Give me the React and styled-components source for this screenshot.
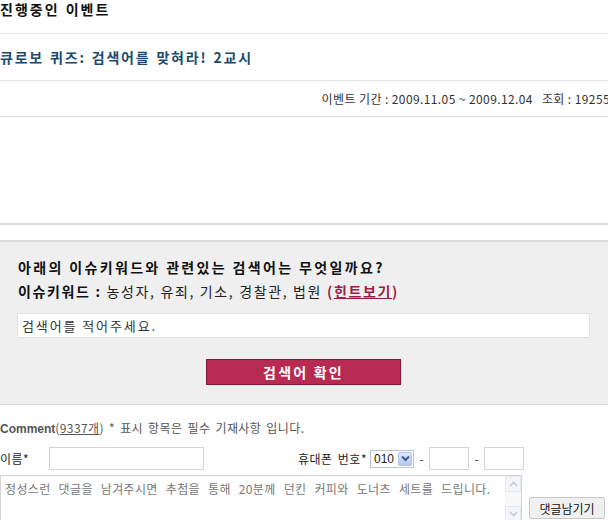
import React from 'react'
import styled, { createGlobalStyle } from 'styled-components'

const GlobalStyle = createGlobalStyle`
    html, body {
        margin: 0;
        padding: 0;
        background: #fff;
    }
    body {
        font-family: "Noto Sans CJK KR", "Liberation Sans", sans-serif;
        color: #222;
        overflow: hidden;
    }
    * {
        box-sizing: border-box;
    }
`

const App = () => {
    return (
        <Page>
            <GlobalStyle />
            <SectionTitle>진행중인 이벤트</SectionTitle>
            <EventTitle>큐로보 퀴즈: 검색어를 맞혀라! 2교시</EventTitle>
            <InfoRow>
                <Info>이벤트 기간 : 2009.11.05 ~ 2009.12.04</Info>
                <Info>조회 : 19255</Info>
            </InfoRow>
            <Banner />
            <QuizBox>
                <Question>아래의 이슈키워드와 관련있는 검색어는 무엇일까요?</Question>
                <Keywords>
                    <b>이슈키워드 :</b> 농성자, 유죄, 기소, 경찰관, 법원{' '}
                    <Hint>(<u>힌트보기</u>)</Hint>
                </Keywords>
                <AnswerInput defaultValue="검색어를 적어주세요." />
                <SubmitButton>검색어 확인</SubmitButton>
            </QuizBox>
            <CommentArea>
                <CommentHead>
                    <CommentLabel>Comment</CommentLabel>(<Count>9337개</Count>) * 표시 항목은 필수 기재사항 입니다.
                </CommentHead>
                <FieldRow>
                    <Field>
                        <Label width={49}>이름*</Label>
                        <TextInput width={155} />
                    </Field>
                    <Field>
                        <Label>휴대폰 번호*</Label>
                        <SelectBox>
                            <Select defaultValue="010">
                                <option>010</option>
                                <option>011</option>
                                <option>016</option>
                            </Select>
                            <SelectArrow>
                                <svg width="9" height="7" viewBox="0 0 9 7">
                                    <path d="M1 1.5 L4.5 5 L8 1.5" fill="none" stroke="#3c5a9a" strokeWidth="2" />
                                </svg>
                            </SelectArrow>
                        </SelectBox>
                        <Dash>-</Dash>
                        <TextInput width={40} />
                        <Dash>-</Dash>
                        <TextInput width={40} />
                    </Field>
                </FieldRow>
                <MessageRow>
                    <MessageBox>
                        <Message placeholder="정성스런 댓글을 남겨주시면 추첨을 통해 20분께 던킨 커피와 도너츠 세트를 드립니다." />
                        <ScrollBar>
                            <ScrollButton>
                                <svg width="9" height="6" viewBox="0 0 9 6">
                                    <path d="M1 5 L4.5 1.5 L8 5" fill="none" stroke="#c3cad6" strokeWidth="1.6" />
                                </svg>
                            </ScrollButton>
                            <ScrollTrack />
                            <ScrollButton>
                                <svg width="9" height="6" viewBox="0 0 9 6">
                                    <path d="M1 1 L4.5 4.5 L8 1" fill="none" stroke="#c3cad6" strokeWidth="1.6" />
                                </svg>
                            </ScrollButton>
                        </ScrollBar>
                    </MessageBox>
                    <PostButton>댓글남기기</PostButton>
                </MessageRow>
            </CommentArea>
        </Page>
    )
}

export default App

const Page = styled.div`
    width: 608px;
    height: 520px;
    overflow: hidden;
`
const SectionTitle = styled.div`
    height: 34px;
    border-bottom: 1px solid #e8e8e8;
    font-size: 14px;
    font-weight: 700;
    line-height: 18px;
    letter-spacing: 2px;
    word-spacing: 1px;
    color: #111;
`
const EventTitle = styled.div`
    height: 47px;
    border-bottom: 1px solid #e2e2e2;
    display: flex;
    align-items: center;
    font-size: 14px;
    font-weight: 700;
    letter-spacing: 1.8px;
    word-spacing: 1px;
    color: #1b4a70;
`
const InfoRow = styled.div`
    height: 36px;
    border-bottom: 1px solid #dedede;
    display: flex;
    justify-content: flex-end;
    align-items: center;
    gap: 9px;
    margin-right: -2px;
    white-space: nowrap;
    overflow: hidden;
`
const Info = styled.span`
    font-size: 12px;
    color: #333;
    letter-spacing: 0.4px;
`
const Banner = styled.div`
    height: 108px;
    border-bottom: 2px solid #dcdcdc;
`
const QuizBox = styled.div`
    margin-top: 15px;
    height: 165px;
    background: #efefef;
    border-top: 2px solid #dcdcdc;
    border-bottom: 1px solid #dcdcdc;
    padding: 15px 18px 0 17px;
    display: flex;
    flex-direction: column;
`
const Question = styled.div`
    font-size: 14px;
    font-weight: 700;
    line-height: 20px;
    letter-spacing: 2.35px;
    color: #111;
    padding-left: 1px;
    white-space: nowrap;
`
const Keywords = styled.div`
    margin-top: 4px;
    font-size: 14px;
    line-height: 20px;
    letter-spacing: 1.65px;
    color: #222;
    padding-left: 1px;
    white-space: nowrap;
    b {
        color: #111;
    }
`
const Hint = styled.b`
    color: #9c1d4a !important;
`
const AnswerInput = styled.input`
    margin-top: 12px;
    height: 25px;
    width: 100%;
    border: 1px solid #e2e2e2;
    background: #fff;
    padding: 0 4px;
    font-family: inherit;
    font-size: 13px;
    letter-spacing: 1.9px;
    color: #333;
    outline: none;
`
const SubmitButton = styled.button`
    margin: 21px auto 0;
    width: 195px;
    height: 26px;
    background: #b72b52;
    border: 1px solid #7e1a37;
    color: #fff;
    font-family: inherit;
    font-size: 14px;
    font-weight: 700;
    letter-spacing: 2.2px;
    padding: 0;
    cursor: pointer;
`
const CommentArea = styled.div`
    padding-top: 15px;
`
const CommentHead = styled.div`
    font-size: 12px;
    line-height: 16px;
    color: #555;
    white-space: nowrap;
    letter-spacing: 0.4px;
    word-spacing: 2px;
`
const CommentLabel = styled.span`
    font-family: "Liberation Sans", sans-serif;
    font-weight: 700;
    color: #555;
    letter-spacing: 0;
`
const Count = styled.span`
    text-decoration: underline;
`
const FieldRow = styled.div`
    margin-top: 10px;
    width: 524px;
    display: flex;
    justify-content: space-between;
    align-items: center;
`
const Field = styled.div`
    display: flex;
    align-items: center;
`
const Label = styled.span`
    width: ${p => (p.width ? `${p.width}px` : 'auto')};
    margin-right: ${p => (p.width ? '0' : '3px')};
    font-size: 12px;
    letter-spacing: 0.5px;
    word-spacing: 2px;
    color: #222;
    white-space: nowrap;
`
const TextInput = styled.input`
    width: ${p => p.width}px;
    height: 23px;
    border: 1px solid #d4d4d4;
    background: #fff;
    outline: none;
    padding: 0 3px;
`
const SelectBox = styled.div`
    position: relative;
    width: 44px;
    height: 18px;
    border: 1px solid #b8c4d8;
    background: #fff;
    display: flex;
    align-items: center;
`
const Select = styled.select`
    appearance: none;
    border: none;
    background: transparent;
    width: 100%;
    height: 100%;
    padding: 0 0 0 3px;
    font-family: "Liberation Sans", sans-serif;
    font-size: 12px;
    color: #222;
    outline: none;
`
const SelectArrow = styled.span`
    position: absolute;
    right: 1px;
    top: 1px;
    width: 14px;
    height: 14px;
    border-radius: 2px;
    background: linear-gradient(#dfe8fb, #b4c8f2);
    border: 1px solid #b0c2ea;
    display: flex;
    align-items: center;
    justify-content: center;
    pointer-events: none;
`
const Dash = styled.span`
    width: 15px;
    text-align: center;
    font-size: 12px;
    color: #333;
`
const MessageRow = styled.div`
    margin-top: 5px;
    display: flex;
    align-items: flex-start;
`
const MessageBox = styled.div`
    width: 522px;
    height: 48px;
    border: 1px solid #d4d4d4;
    display: flex;
`
const Message = styled.textarea`
    flex: 1;
    border: none;
    resize: none;
    outline: none;
    padding: 4px 4px;
    font-family: inherit;
    font-size: 12px;
    line-height: 18px;
    letter-spacing: 0.35px;
    word-spacing: 5px;
    &::placeholder {
        color: #777;
    }
`
const ScrollBar = styled.div`
    width: 16px;
    display: flex;
    flex-direction: column;
    background: #f7f8fa;
`
const ScrollButton = styled.div`
    height: 16px;
    border: 1px solid #e4e8ef;
    background: #f3f5f9;
    display: flex;
    align-items: center;
    justify-content: center;
`
const ScrollTrack = styled.div`
    flex: 1;
`
const PostButton = styled.button`
    margin: 22px 0 0 7px;
    width: 76px;
    height: 22px;
    background: #f0f0f0;
    border: 1px solid #c8c8c8;
    border-radius: 2px;
    font-family: inherit;
    font-size: 12px;
    color: #111;
    padding: 0;
`
